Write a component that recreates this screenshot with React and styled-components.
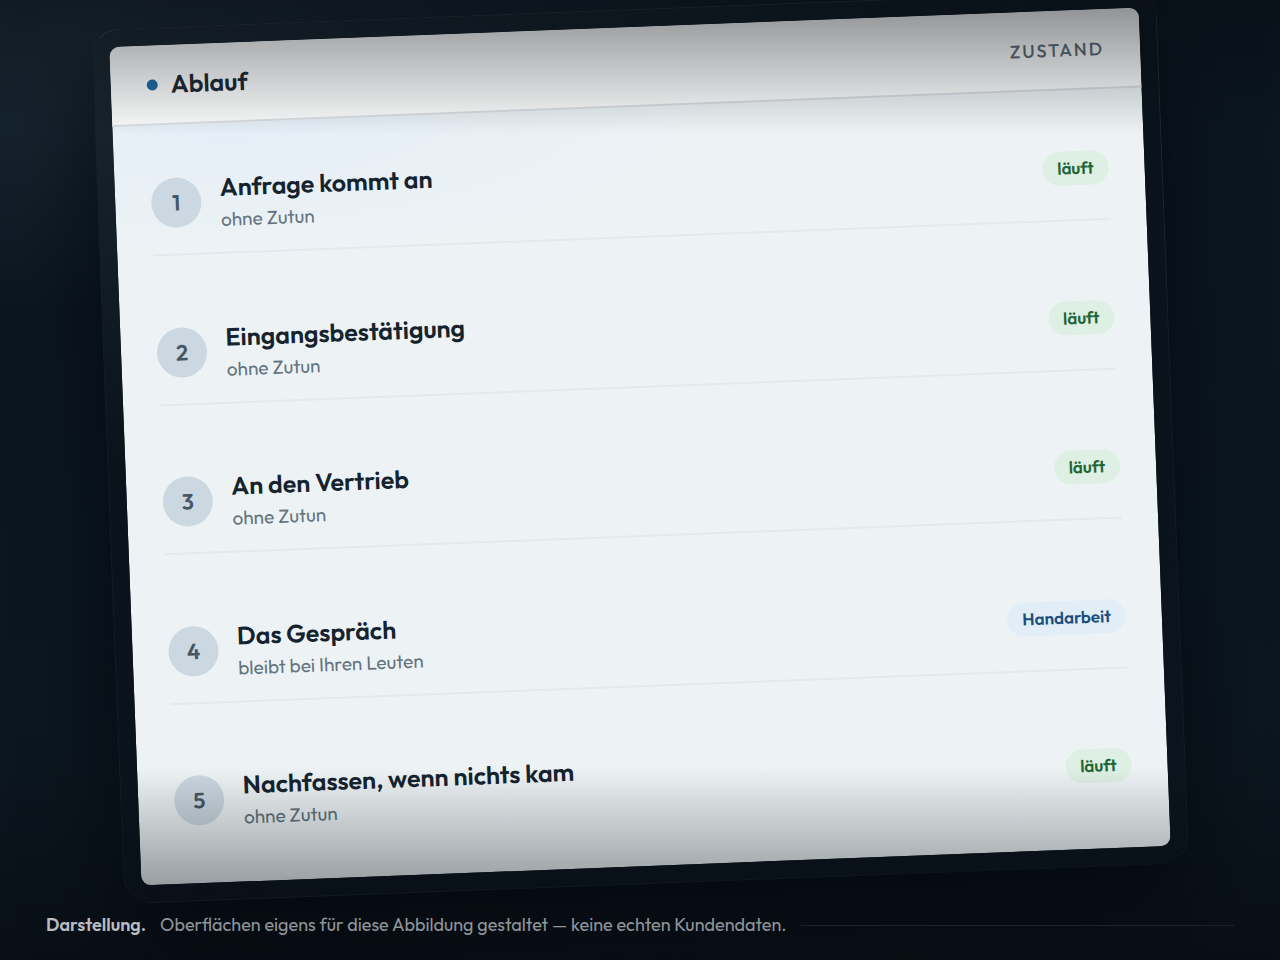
import React from "react";
import styled, { createGlobalStyle } from "styled-components";

const GlobalStyle = createGlobalStyle`
  * {
    box-sizing: border-box;
  }

  body {
    margin: 0;
    background: #08111a;
    font-family: Outfit, Lato, "Open Sans", sans-serif;
  }
`;

const Page = styled.main`
  position: relative;
  display: flex;
  flex-direction: column;
  min-height: 100vh;
  overflow: hidden;
  background:
    radial-gradient(ellipse 70% 30% at 8% 2%, rgba(46, 66, 80, 0.45), rgba(46, 66, 80, 0)),
    linear-gradient(180deg, #0b1620 0%, #0b1720 60%, #0c151d 100%);
`;

const Stage = styled.div`
  flex: 1;
  display: flex;
  padding: 9px 107px 0;
`;

const Frame = styled.div`
  flex: 1;
  display: flex;
  padding: 17px;
  border: 1px solid;
  border-color: rgba(255, 255, 255, 0.12) rgba(255, 255, 255, 0.04) rgba(255, 255, 255, 0);
  border-radius: 28px;
  background: linear-gradient(160deg, #1a2731 0%, #0a131b 35%, #0b141c 100%);
  box-shadow: 0 50px 90px rgba(2, 4, 10, 0.65);
  transform: rotate(-2.2deg);
`;

const Panel = styled.section`
  flex: 1;
  display: flex;
  flex-direction: column;
  overflow: hidden;
  border-radius: 10px;
  background:
    radial-gradient(ellipse 46% 18% at 12% 8%, #e4edf7, rgba(228, 237, 247, 0)),
    #edf3f5;
`;

const PanelHeader = styled.header`
  display: flex;
  align-items: center;
  justify-content: space-between;
  height: 80px;
  padding: 0 36px;
  border-bottom: 2px solid #d9dee3;
  background: #fbfcfc;
`;

const PanelTitle = styled.h1`
  display: flex;
  align-items: center;
  gap: 13px;
  margin: 0;
  color: #1b2a35;
  font-size: 25px;
  font-weight: 600;

  &::before {
    content: "";
    width: 11px;
    height: 11px;
    border-radius: 50%;
    background: #1f6aa5;
  }
`;

const ColumnLabel = styled.span`
  color: #5c6c79;
  font-size: 18px;
  font-weight: 500;
  letter-spacing: 2px;
  text-transform: uppercase;
`;

const Steps = styled.ol`
  flex: 1;
  display: flex;
  flex-direction: column;
  justify-content: space-between;
  margin: 0;
  padding: 27px 36px 30px;
  list-style: none;
`;

const Step = styled.li`
  display: flex;
  align-items: center;
  gap: 19px;
  height: 104px;
  border-bottom: 2px solid ${(props) => (props.$last ? "transparent" : "#e3e9ed")};
`;

const Count = styled.span`
  display: flex;
  align-items: center;
  justify-content: center;
  width: 50px;
  height: 50px;
  border-radius: 50%;
  background: #cbd8e1;
  color: #465764;
  font-size: 22px;
  font-weight: 600;
`;

const StepText = styled.div`
  flex: 1;
`;

const StepTitle = styled.h2`
  margin: 0;
  color: #14232e;
  font-size: 25px;
  font-weight: 600;
  line-height: 32px;
`;

const StepNote = styled.p`
  margin: 4px 0 0;
  color: #64747f;
  font-size: 19px;
  line-height: 24px;
`;

const Badge = styled.span`
  padding: 0 15px;
  border-radius: 17px;
  background: ${(props) => (props.$manual ? "#e1eef8" : "#deefe3")};
  color: ${(props) => (props.$manual ? "#1b4f7a" : "#1f6636")};
  font-size: 17px;
  font-weight: 600;
  line-height: 34px;
`;

const Shade = styled.div`
  position: absolute;
  inset: 0;
  pointer-events: none;
  background:
    linear-gradient(180deg, rgba(6, 10, 16, 0.46), rgba(6, 10, 16, 0) 14%),
    linear-gradient(0deg, rgba(6, 10, 16, 0.6), rgba(6, 10, 16, 0) 20%);
`;

const Caption = styled.footer`
  position: relative;
  z-index: 1;
  display: flex;
  align-items: center;
  gap: 14px;
  padding: 27px 46px 21px;
  color: #8f959a;
  font-size: 18px;
  line-height: 28px;

  &::after {
    content: "";
    flex: 1;
    height: 1px;
    background: #1b2228;
  }
`;

const CaptionLead = styled.strong`
  color: #b9bdc1;
  font-weight: 600;
`;

const steps = [
  { title: "Anfrage kommt an", note: "ohne Zutun", state: "läuft" },
  { title: "Eingangsbestätigung", note: "ohne Zutun", state: "läuft" },
  { title: "An den Vertrieb", note: "ohne Zutun", state: "läuft" },
  { title: "Das Gespräch", note: "bleibt bei Ihren Leuten", state: "Handarbeit" },
  { title: "Nachfassen, wenn nichts kam", note: "ohne Zutun", state: "läuft" },
];

const App = () => {
  return (
    <>
      <GlobalStyle />
      <Page>
        <Stage>
          <Frame>
            <Panel>
              <PanelHeader>
                <PanelTitle>Ablauf</PanelTitle>
                <ColumnLabel>Zustand</ColumnLabel>
              </PanelHeader>
              <Steps>
                {steps.map((step, i) => (
                  <Step key={step.title} $last={i === steps.length - 1}>
                    <Count>{i + 1}</Count>
                    <StepText>
                      <StepTitle>{step.title}</StepTitle>
                      <StepNote>{step.note}</StepNote>
                    </StepText>
                    <Badge $manual={step.state === "Handarbeit"}>{step.state}</Badge>
                  </Step>
                ))}
              </Steps>
            </Panel>
          </Frame>
        </Stage>
        <Shade />
        <Caption>
          <CaptionLead>Darstellung.</CaptionLead>
          <span>Oberflächen eigens für diese Abbildung gestaltet — keine echten Kundendaten.</span>
        </Caption>
      </Page>
    </>
  );
};

export default App;
